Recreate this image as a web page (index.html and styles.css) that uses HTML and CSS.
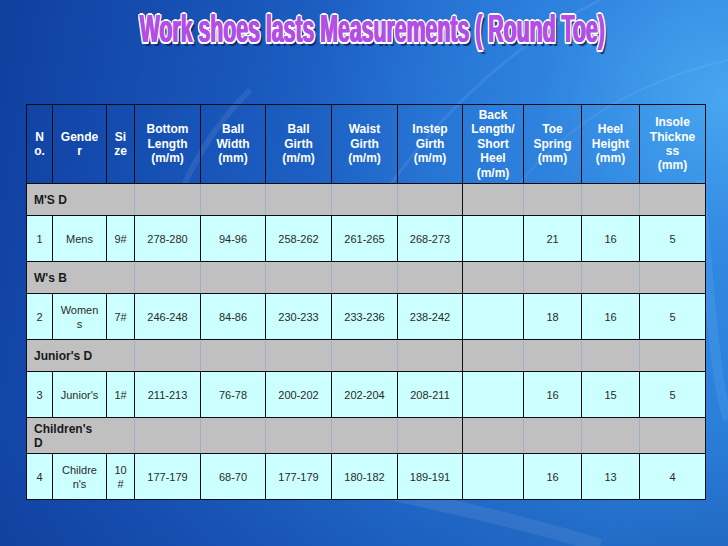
FILE: index.html
```html
<!DOCTYPE html>
<html lang="en">
<head>
<meta charset="utf-8">
<title>Work shoes lasts Measurements</title>
<link rel="stylesheet" href="styles.css">
</head>
<body>
<div class="slide">
  <svg class="swoosh" width="728" height="546" viewBox="0 0 728 546" aria-hidden="true">
    <path d="M600 0 C 520 40, 440 110, 380 200" fill="none" stroke="rgba(255,255,255,0.08)" stroke-width="3"/>
    <path d="M728 60 C 600 90, 520 160, 470 260" fill="none" stroke="rgba(255,255,255,0.07)" stroke-width="2"/>
    <path d="M250 90 C 200 140, 170 200, 160 270" fill="none" stroke="rgba(255,255,255,0.08)" stroke-width="6"/>
    <path d="M330 480 C 420 500, 520 520, 600 546" fill="none" stroke="rgba(255,255,255,0.10)" stroke-width="14"/>
    <path d="M700 180 C 710 300, 715 380, 728 420" fill="none" stroke="rgba(120,200,255,0.15)" stroke-width="10"/>
  </svg>
  <h1 class="title"><span>Work shoes lasts Measurements ( Round Toe)</span></h1>
  <table class="grid">
    <colgroup>
      <col class="w26"><col class="w54"><col class="w28"><col class="w66"><col class="w65"><col class="w66">
      <col class="w66"><col class="w65"><col class="w61"><col class="w58"><col class="w58"><col class="w66">
    </colgroup>
    <thead>
      <tr class="hd">
        <th>No.</th><th>Gender</th><th>Size</th><th>Bottom Length (m/m)</th><th>Ball Width (mm)</th>
        <th>Ball Girth (m/m)</th><th>Waist Girth (m/m)</th><th>Instep Girth (m/m)</th>
        <th>Back Length/ Short Heel (m/m)</th><th>Toe Spring (mm)</th><th>Heel Height (mm)</th><th>Insole Thickness<br>(mm)</th>
      </tr>
    </thead>
    <tbody>
      <tr class="grp">
        <td colspan="3" class="gl"><span>M'S D</span></td><td></td><td></td><td></td><td></td><td class="dk"></td><td></td><td></td><td></td><td class="gr"></td>
      </tr>
      <tr class="row">
        <td>1</td><td>Mens</td><td>9#</td><td>278-280</td><td>94-96</td><td>258-262</td><td>261-265</td><td>268-273</td><td></td><td>21</td><td>16</td><td>5</td>
      </tr>
      <tr class="grp">
        <td colspan="3" class="gl"><span>W's B</span></td><td></td><td></td><td></td><td></td><td class="dk"></td><td></td><td></td><td></td><td class="gr"></td>
      </tr>
      <tr class="row">
        <td>2</td><td>Womens</td><td>7#</td><td>246-248</td><td>84-86</td><td>230-233</td><td>233-236</td><td>238-242</td><td></td><td>18</td><td>16</td><td>5</td>
      </tr>
      <tr class="grp">
        <td colspan="3" class="gl"><span>Junior's D</span></td><td></td><td></td><td></td><td></td><td class="dk"></td><td></td><td></td><td></td><td class="gr"></td>
      </tr>
      <tr class="row">
        <td>3</td><td>Junior's</td><td>1#</td><td>211-213</td><td>76-78</td><td>200-202</td><td>202-204</td><td>208-211</td><td></td><td>16</td><td>15</td><td>5</td>
      </tr>
      <tr class="grp tall">
        <td colspan="3" class="gl"><span>Children's D</span></td><td></td><td></td><td></td><td></td><td class="dk"></td><td></td><td></td><td></td><td class="gr"></td>
      </tr>
      <tr class="row">
        <td>4</td><td>Children's</td><td>10#</td><td>177-179</td><td>68-70</td><td>177-179</td><td>180-182</td><td>189-191</td><td></td><td>16</td><td>13</td><td>4</td>
      </tr>
    </tbody>
  </table>
</div>
</body>
</html>
```

FILE: styles.css
```css
html, body {
  margin: 0;
  padding: 0;
}

body {
  background: #1a56b8;
  font-family: "Liberation Sans", Arial, sans-serif;
}

.slide {
  position: relative;
  width: 728px;
  height: 546px;
  overflow: hidden;
  display: flex;
  flex-direction: column;
  background:
    radial-gradient(ellipse 420px 340px at 100% 18%, rgba(80, 175, 245, 0.8) 0%, rgba(60, 150, 235, 0.4) 45%, rgba(40, 120, 220, 0) 100%),
    linear-gradient(100deg, #0f3f9f 0%, #1956ba 30%, #2370d2 60%, #2a80dc 85%, #2a7ed8 100%);
}

.slide::after {
  content: "";
  position: absolute;
  left: 0;
  right: 0;
  bottom: 0;
  height: 120px;
  background: linear-gradient(180deg, rgba(10, 40, 120, 0) 0%, rgba(10, 45, 130, 0.25) 100%);
  pointer-events: none;
}

.swoosh {
  position: absolute;
  left: 0;
  top: 0;
}

.title {
  position: relative;
  z-index: 1;
  margin: 10px 0 0 0;
  padding-left: 16px;
  height: 38px;
  display: flex;
  justify-content: center;
  font-family: "Liberation Sans", sans-serif;
  font-weight: bold;
  font-size: 38px;
  line-height: 38px;
  white-space: nowrap;
  color: #b24ee6;
  text-shadow:
    1px 0 0 #b24ee6, -1px 0 0 #b24ee6,
    -2.5px -1.5px 0 #fff, 2.5px -1.5px 0 #fff, -2.5px 1.5px 0 #fff, 2.5px 1.5px 0 #fff,
    0 -2px 0 #fff, 0 2px 0 #fff, -3px 0 0 #fff, 3px 0 0 #fff,
    5px 3.5px 1px rgba(20, 30, 90, 0.85);
}

.title span {
  display: inline-block;
  transform: scaleX(0.56);
  transform-origin: center;
}

.grid {
  position: relative;
  z-index: 1;
  margin: 56px 0 0 26px;
  width: 679px;
  table-layout: fixed;
  border-collapse: collapse;
  font-size: 11px;
}

.w26 { width: 26px; }
.w28 { width: 28px; }
.w54 { width: 54px; }
.w58 { width: 58px; }
.w61 { width: 61px; }
.w65 { width: 65px; }
.w66 { width: 66px; }

.grid th,
.grid td {
  border: 1px solid #0c0c14;
  padding: 0 7px;
  text-align: center;
  vertical-align: middle;
  overflow-wrap: anywhere;
}

.hd th {
  height: 78px;
  color: #fff;
  font-weight: bold;
  font-size: 12px;
  line-height: 14.4px;
}

.row td {
  height: 45px;
  background: #ccffff;
  color: #2a2a2a;
  line-height: 14px;
}

.grp td {
  height: 31px;
  background: #c0c0c0;
  border-left-color: #9fb0c8;
  border-right-color: #9fb0c8;
}

.grp.tall td {
  height: 35px;
}

.grp td.gl {
  text-align: left;
  border-left-color: #0c0c14;
  color: #1a1a1a;
  font-weight: bold;
  font-size: 12px;
  line-height: 14px;
}

.grp td.gl span {
  display: block;
  width: 62px;
}

.grp td.dk {
  border-right-color: #0c0c14;
}

.grp td.gr {
  border-right-color: #0c0c14;
}
```
